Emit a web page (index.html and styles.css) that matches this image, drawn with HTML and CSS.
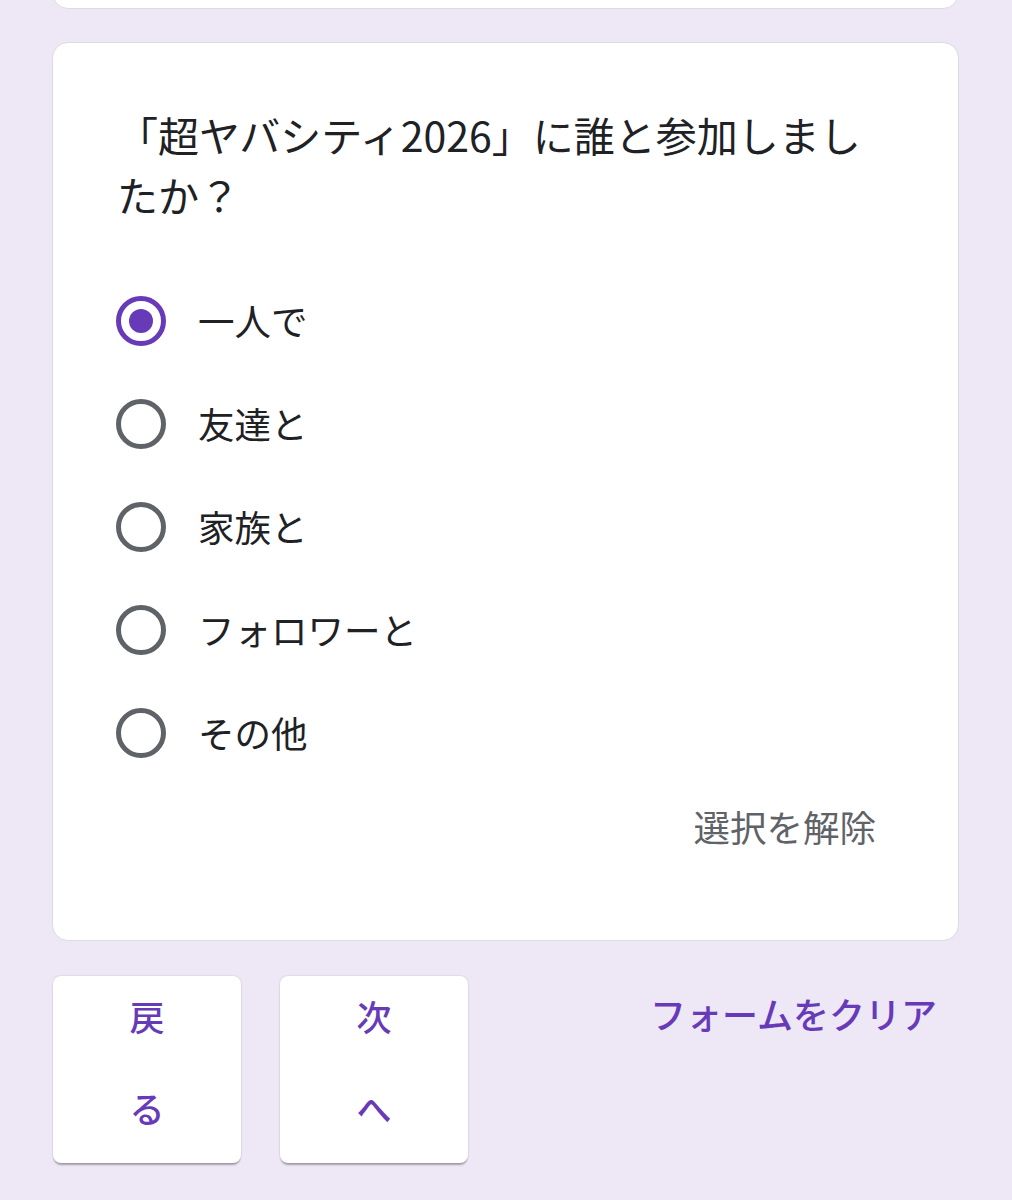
FILE: index.html
```html
<!DOCTYPE html>
<html lang="ja">
<head>
<meta charset="utf-8">
<link rel="stylesheet" href="styles.css">
</head>
<body>
<div class="page">
  <div class="prev-card"></div>
  <div class="card">
    <div class="question">「超ヤバシティ2026」に誰と参加しましたか？</div>
    <div class="options">
      <div class="option"><span class="radio checked"><span class="dot"></span></span><span class="label">一人で</span></div>
      <div class="option"><span class="radio"></span><span class="label">友達と</span></div>
      <div class="option"><span class="radio"></span><span class="label">家族と</span></div>
      <div class="option"><span class="radio"></span><span class="label">フォロワーと</span></div>
      <div class="option"><span class="radio"></span><span class="label">その他</span></div>
    </div>
    <div class="clear-row"><span class="clear-sel">選択を解除</span></div>
  </div>
  <div class="actions">
    <div class="btn"><span class="btn-label">戻る</span></div>
    <div class="btn"><span class="btn-label">次へ</span></div>
    <span class="clear-form">フォームをクリア</span>
  </div>
</div>
</body>
</html>
```

FILE: styles.css
```css
html, body {
  margin: 0;
  padding: 0;
  background: #ede7f6;
}
body {
  font-family: "Noto Sans CJK JP", "Noto Sans", sans-serif;
  color: #202124;
  overflow: hidden;
}
.page {
  margin: 0 53px 0 52px;
  height: 1200px;
}
.prev-card {
  height: 39px;
  margin-top: -32px;
  background: #fff;
  border: 1px solid #dadce0;
  border-radius: 16px;
}
.card {
  margin-top: 33px;
  background: #fff;
  border: 1px solid #dadce0;
  border-radius: 16px;
  padding: 61px 64px 88px 64px;
}
.question {
  font-size: 41px;
  line-height: 60px;
  margin-right: 8px;
}
.options {
  margin-top: 45px;
  display: flex;
  flex-direction: column;
}
.option {
  height: 103px;
  display: flex;
  align-items: center;
}
.radio {
  box-sizing: border-box;
  width: 50px;
  height: 50px;
  border: 5px solid #5f6368;
  border-radius: 50%;
  display: flex;
  align-items: center;
  justify-content: center;
  flex: none;
  margin-left: -1px;
}
.radio.checked {
  border-color: #673ab7;
}
.dot {
  width: 24px;
  height: 24px;
  border-radius: 50%;
  background: #673ab7;
}
.label {
  margin-left: 32px;
  font-size: 36.5px;
  line-height: 50px;
}
.clear-row {
  margin-top: 18px;
  display: flex;
  justify-content: flex-end;
}
.clear-sel {
  font-size: 36.5px;
  line-height: 50px;
  color: #5f6368;
  padding-right: 18px;
}
.actions {
  margin-top: 35px;
  display: flex;
  align-items: flex-start;
  gap: 39px;
}
.btn {
  box-sizing: border-box;
  width: 188px;
  height: 187px;
  margin-left: 1px;
  background: #fff;
  border-radius: 8px;
  box-shadow: 0 3px 2px -1px rgba(0,0,0,0.3), 0 0 2px rgba(0,0,0,0.18);
  display: flex;
  justify-content: center;
  align-items: flex-start;
}
.btn + .btn {
  margin-left: 0;
}
.btn-label {
  width: 1em;
  margin-top: -6px;
  font-size: 35px;
  line-height: 92px;
  color: #673ab7;
  font-weight: 500;
  text-align: center;
}
.clear-form {
  margin-left: auto;
  margin-top: 12px;
  margin-right: 22px;
  font-size: 36px;
  line-height: 50px;
  color: #673ab7;
  font-weight: 500;
}
```
